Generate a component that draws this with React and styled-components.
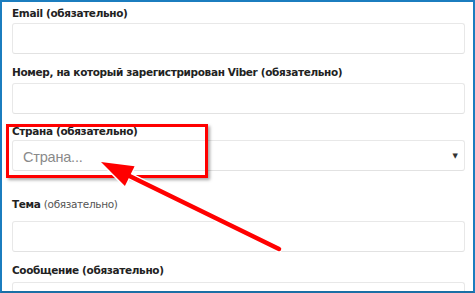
import React from "react";
import styled, { createGlobalStyle } from "styled-components";

const Global = createGlobalStyle`
  html, body {
    margin: 0;
    padding: 0;
    background: #fff;
  }
`;

const Frame = styled.div`
  position: relative;
  width: 475px;
  height: 293px;
  box-sizing: border-box;
  border: 2px solid #1b7dbf;
  border-bottom-color: #1a6fa5;
  overflow: hidden;
  background: #fff;
  font-family: "DejaVu Sans", Verdana, sans-serif;
`;

const Form = styled.div`
  display: flex;
  flex-direction: column;
  padding: 4px 8px 0 10px;
`;

const Field = styled.div`
  display: flex;
  flex-direction: column;
  margin-top: ${({ $top }) => $top}px;
`;

const Label = styled.div`
  font-size: 10.5px;
  line-height: 14px;
  font-weight: bold;
  letter-spacing: -0.35px;
  color: #222;
  margin-bottom: ${({ $gap }) => $gap}px;
  white-space: nowrap;

  span {
    font-weight: normal;
    color: #555;
  }
`;

const Input = styled.div`
  height: 31px;
  box-sizing: border-box;
  border: 1px solid #e8e8e8;
  border-bottom-color: #e2e2e2;
  border-radius: 3px;
  background: #fff;
`;

const Select = styled(Input)`
  display: flex;
  align-items: center;
  justify-content: space-between;
  padding: 0 6px 0 10px;
`;

const Placeholder = styled.span`
  font-family: "Liberation Sans", Arial, sans-serif;
  font-size: 14.5px;
  letter-spacing: -0.2px;
  color: #8a8a8a;
  margin-top: 3px;
`;

const Caret = styled.span`
  font-size: 7px;
  color: #333;
  margin-top: 1px;
`;

const Highlight = styled.div`
  position: absolute;
  left: 4px;
  top: 122px;
  width: 202px;
  height: 54px;
  box-sizing: border-box;
  border: 3px solid #ff0000;
  box-shadow: 2px 2px 3px rgba(0, 0, 0, 0.35);
  pointer-events: none;
`;

const Overlay = styled.svg`
  position: absolute;
  left: -2px;
  top: -2px;
  pointer-events: none;
`;

function Arrow() {
  const tip = [101, 162];
  const tail = [279, 249];
  const dx = tail[0] - tip[0];
  const dy = tail[1] - tip[1];
  const len = Math.hypot(dx, dy);
  const ux = dx / len;
  const uy = dy / len;
  const bx = tip[0] + ux * 32;
  const by = tip[1] + uy * 32;
  const w = 11;
  const pts = `${tip[0]},${tip[1]} ${bx - uy * w},${by + ux * w} ${bx + uy * w},${by - ux * w}`;
  return (
    <Overlay width="475" height="293" viewBox="0 0 475 293">
      <line x1={bx - ux * 2} y1={by - uy * 2} x2={tail[0]} y2={tail[1]} stroke="#fff" strokeWidth="7" strokeLinecap="round" />
      <polygon points={pts} fill="#fff" stroke="#fff" strokeWidth="3" strokeLinejoin="round" />
      <line x1={bx - ux * 2} y1={by - uy * 2} x2={tail[0]} y2={tail[1]} stroke="#ff0000" strokeWidth="4.5" strokeLinecap="round" />
      <polygon points={pts} fill="#ff0000" />
    </Overlay>
  );
}

export default function App() {
  return (
    <Frame>
      <Global />
      <Form>
        <Field $top={0}>
          <Label $gap={3}>Email (обязательно)</Label>
          <Input />
        </Field>
        <Field $top={11}>
          <Label $gap={4}>Номер, на который зарегистрирован Viber (обязательно)</Label>
          <Input />
        </Field>
        <Field $top={10}>
          <Label $gap={2}>Страна (обязательно)</Label>
          <Select>
            <Placeholder>Страна...</Placeholder>
            <Caret>▼</Caret>
          </Select>
        </Field>
        <Field $top={26}>
          <Label $gap={10}>
            Тема <span>(обязательно)</span>
          </Label>
          <Input />
        </Field>
        <Field $top={11}>
          <Label $gap={5}>Сообщение (обязательно)</Label>
          <Input />
        </Field>
      </Form>
      <Highlight />
      <Arrow />
    </Frame>
  );
}
